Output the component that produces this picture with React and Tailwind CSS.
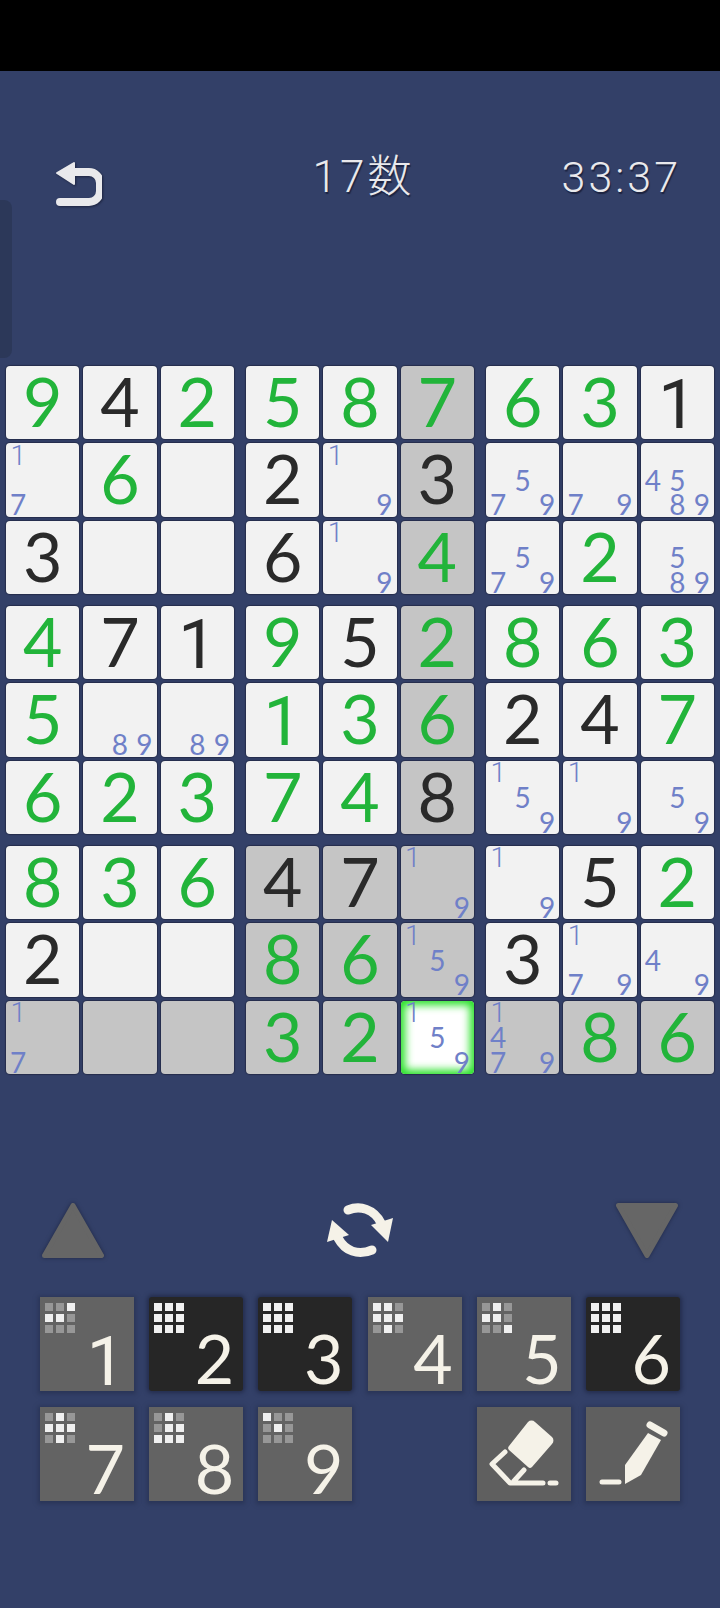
import React from "react";

// g = green given digit, k = black placed digit, n = pencil notes, - = empty
const rows = [
  ["g9", "k4", "g2", "g5", "g8", "g7", "g6", "g3", "k1"],
  ["n17", "g6", "-", "k2", "n19", "k3", "n579", "n79", "n4589"],
  ["k3", "-", "-", "k6", "n19", "g4", "n579", "g2", "n589"],
  ["g4", "k7", "k1", "g9", "k5", "g2", "g8", "g6", "g3"],
  ["g5", "n89", "n89", "g1", "g3", "g6", "k2", "k4", "g7"],
  ["g6", "g2", "g3", "g7", "g4", "k8", "n159", "n19", "n59"],
  ["g8", "g3", "g6", "k4", "k7", "n19", "n19", "k5", "g2"],
  ["k2", "-", "-", "g8", "g6", "n159", "k3", "n179", "n49"],
  ["n17", "-", "-", "g3", "g2", "n159", "n1479", "g8", "g6"],
];

const numberKeys = [
  { n: 1, mask: "001110000", done: false },
  { n: 2, mask: "111111111", done: true },
  { n: 3, mask: "111111111", done: true },
  { n: 4, mask: "110111010", done: false },
  { n: 5, mask: "010110001", done: false },
  { n: 6, mask: "111111111", done: true },
  { n: 7, mask: "010111010", done: false },
  { n: 8, mask: "010011111", done: false },
  { n: 9, mask: "100010000", done: false },
];

function isHighlighted(r, c) {
  if (r === 8 || c === 5) return true;
  return r >= 6 && c >= 3 && c <= 5;
}

// Lato's 1 has a foot, Roboto's is a plain stem but sits a little higher
function bigOne(d) {
  return String(d) === "1" ? "font-['Roboto',sans-serif] translate-y-[4px]" : "";
}

function Notes({ digits }) {
  return (
    <div className="grid h-full w-full grid-cols-3 grid-rows-3">
      {[1, 2, 3, 4, 5, 6, 7, 8, 9].map((d) => (
        <span
          key={d}
          className={
            d === 1
              ? "flex items-center justify-center font-['Roboto',sans-serif] text-[28px] leading-[24px] font-light text-[#6f80c8]"
              : "flex items-center justify-center text-[28px] leading-[24px] text-[#6f80c8]"
          }
        >
          {digits.includes(String(d)) ? d : ""}
        </span>
      ))}
    </div>
  );
}

function Cell({ value, r, c }) {
  const selected = r === 8 && c === 5;
  const kind = value[0];
  let bg = isHighlighted(r, c) ? "bg-[#c5c5c5]" : "bg-[#f2f2f2]";
  if (selected) bg = "bg-white shadow-[inset_0_0_8px_4px_#22e022,0_0_1px_1px_#252d4c]";
  else bg += " shadow-[0_0_1px_1px_#252d4c]";

  return (
    <div className={`flex h-[73.33px] items-center justify-center rounded-[4px] ${bg}`}>
      {kind === "n" && <Notes digits={value.slice(1)} />}
      {kind === "g" && (
        <span className={`pb-[3px] text-[68px] leading-none text-[#22b43a] ${bigOne(value[1])}`}>
          {value[1]}
        </span>
      )}
      {kind === "k" && (
        <span className={`pb-[3px] text-[68px] leading-none text-[#2a2a2a] ${bigOne(value[1])}`}>
          {value[1]}
        </span>
      )}
    </div>
  );
}

function Board() {
  const boxes = [0, 3, 6];
  return (
    <div className="grid grid-cols-3 gap-[12px] px-[6px]">
      {boxes.map((br) =>
        boxes.map((bc) => (
          <div key={`${br}-${bc}`} className="grid grid-cols-3 gap-[4px]">
            {[0, 1, 2].map((i) =>
              [0, 1, 2].map((j) => (
                <Cell key={j} value={rows[br + i][bc + j]} r={br + i} c={bc + j} />
              ))
            )}
          </div>
        ))
      )}
    </div>
  );
}

function MiniGrid({ mask }) {
  return (
    <div className="grid w-[30px] grid-cols-3 gap-[3px]">
      {mask.split("").map((on, i) => (
        <span
          key={i}
          className={on === "1" ? "h-[8px] w-[8px] bg-[#f0f0f0]" : "h-[8px] w-[8px] bg-[#979797]"}
        />
      ))}
    </div>
  );
}

function NumberKey({ n, mask, done }) {
  return (
    <button
      className={
        done
          ? "flex h-[94px] flex-col rounded-[3px] bg-[#262626] pt-[6px] pr-[9px] pl-[5px] text-left shadow-[0_0_4px_2px_#232c4c]"
          : "flex h-[94px] flex-col bg-[#636363] pt-[6px] pr-[9px] pl-[5px] text-left shadow-[0_1px_4px_2px_#2a3558]"
      }
    >
      <MiniGrid mask={mask} />
      <span className={`-mt-[2px] self-end text-[68px] leading-[54px] text-[#f5f2e8] ${bigOne(n)}`}>
        {n}
      </span>
    </button>
  );
}

function ToolKey({ children }) {
  return (
    <button className="h-[94px] bg-[#5f5f5f] shadow-[0_1px_4px_2px_#2a3558]">
      <svg viewBox="0 0 94 94" className="h-[94px] w-[94px]">
        {children}
      </svg>
    </button>
  );
}

export default function App() {
  return (
    <div className="relative h-[1608px] w-[720px] overflow-hidden bg-[#334068] font-['Lato',sans-serif]">
      <div className="h-[71px] bg-black" />

      {/* drawer handle on the left edge */}
      <div className="absolute top-[200px] left-0 h-[158px] w-[12px] rounded-r-[8px] bg-[#2c3859]" />

      <header className="mt-[81px] grid h-[46px] grid-cols-[1fr_auto_1fr] items-center pr-[39px] pl-[46px]">
        <svg viewBox="0 0 56 56" className="h-[56px] w-[56px] drop-shadow-[1px_1px_1px_#1c2340]" fill="none">
          <path d="M25 20H43a11 11 0 0 1 11 11V39a11 11 0 0 1-11 11H14" stroke="#e9e9ec" strokeWidth="8" strokeLinecap="round" />
          <path d="M11 21 28 11V32Z" fill="#e9e9ec" stroke="#e9e9ec" strokeWidth="2" strokeLinejoin="round" />
        </svg>
        <div className="pb-[6px] font-['Roboto','Noto_Sans_CJK_JP',sans-serif] text-[44px] leading-none font-light tracking-[3px] text-[#e9e9ec] [text-shadow:1px_2px_1px_#1c2340]">
          17数
        </div>
        <div className="justify-self-end pb-[6px] font-['Roboto',sans-serif] text-[43px] leading-none font-light tracking-[3px] text-[#e9e9ec] [text-shadow:1px_2px_1px_#1c2340]">
          33:37
        </div>
      </header>

      <main className="mt-[168px]">
        <Board />
      </main>

      <div className="mt-[126px] flex h-[60px] items-center justify-between px-[40px]">
        <svg viewBox="0 0 66 60" className="h-[60px] w-[66px] drop-shadow-[0_0_2px_#1f2745]">
          <path d="M4.5 55.5 33 5.5 61.5 55.5Z" fill="#666666" stroke="#666666" strokeWidth="5" strokeLinejoin="round" />
        </svg>
        <svg viewBox="0 0 100 90" className="h-[90px] w-[100px]" fill="none">
          <path d="M38 25C50 20 64 24 71 38" stroke="#f5f2e8" strokeWidth="9" strokeLinecap="round" />
          <path d="M61 40 83 33 78 57Z" fill="#f5f2e8" />
          <path d="M62 65C48 71 35 66 28 53" stroke="#f5f2e8" strokeWidth="9" strokeLinecap="round" />
          <path d="M22 35 39 50 17 57Z" fill="#f5f2e8" />
        </svg>
        <svg viewBox="0 0 66 60" className="h-[60px] w-[66px] drop-shadow-[0_0_2px_#1f2745]">
          <path d="M4.5 5.5H61.5L33 55.5Z" fill="#666666" stroke="#666666" strokeWidth="5" strokeLinejoin="round" />
        </svg>
      </div>

      <div className="mx-[40px] mt-[37px] grid grid-cols-6 gap-x-[15.2px] gap-y-[16px]">
        {numberKeys.map((k) => (
          <NumberKey key={k.n} {...k} />
        ))}
        <div />
        <ToolKey>
          <path d="M51 15a5 5 0 0 1 7 0L75 30a5 5 0 0 1 0 7L55 60a3 3 0 0 1-4 0L32 43a3 3 0 0 1 0-4Z" fill="#f5f2e8" />
          <path d="M28 45 15 57 33 76H66M47 63 37 74" fill="none" stroke="#f5f2e8" strokeWidth="5" strokeLinecap="round" strokeLinejoin="round" />
          <path d="M73 76H79" stroke="#f5f2e8" strokeWidth="5" strokeLinecap="round" />
        </ToolKey>
        <ToolKey>
          <path d="M64 18 78 26" stroke="#f5f2e8" strokeWidth="7" strokeLinecap="round" />
          <path d="M62 26 75 33 55 68 39 77V58Z" fill="#f5f2e8" />
          <path d="M16 75H33" stroke="#f5f2e8" strokeWidth="5" strokeLinecap="round" />
        </ToolKey>
      </div>
    </div>
  );
}
